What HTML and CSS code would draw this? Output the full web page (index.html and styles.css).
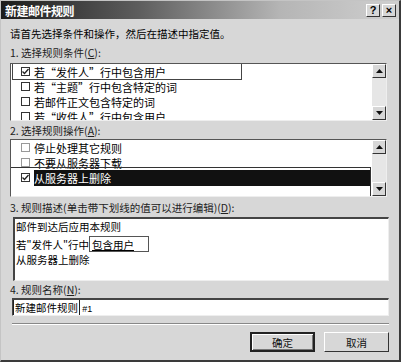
FILE: index.html
```html
<!DOCTYPE html>
<html lang="zh-CN">
<head>
    <meta charset="UTF-8">
    <title>新建邮件规则</title>
    <link rel="stylesheet" href="styles.css">
</head>
<body>

    <div class="dialog">
        <div class="titlebar">
            <span class="title">新建邮件规则</span>
            <div class="title-buttons">
                <span class="tbtn">?</span>
                <span class="tbtn">×</span>
            </div>
        </div>

        <div class="content">
            <div class="intro">请首先选择条件和操作，然后在描述中指定值。</div>

            <div class="label">1. 选择规则条件(<u>C</u>):</div>
            <div class="listbox">
                <div class="items">
                    <div class="row focus"><span class="check on"><svg width="7" height="7" viewBox="0 0 7 7"><polyline points="0.5,3.5 2.5,5.5 6.5,1" fill="none" stroke="#222" stroke-width="1.3"/></svg></span>若“发件人”行中包含用户</div>
                    <div class="row"><span class="check"></span>若“主题”行中包含特定的词</div>
                    <div class="row"><span class="check"></span>若邮件正文包含特定的词</div>
                    <div class="row"><span class="check"></span>若“收件人”行中包含用户</div>
                </div>
                <div class="scrollbar">
                    <span class="arrow"><svg width="7" height="4" viewBox="0 0 7 4"><polygon points="0,4 7,4 3.5,0" fill="#111"/></svg></span>
                    <span class="track"></span>
                    <span class="arrow"><svg width="7" height="4" viewBox="0 0 7 4"><polygon points="0,0 7,0 3.5,4" fill="#111"/></svg></span>
                </div>
            </div>

            <div class="label second">2. 选择规则操作(<u>A</u>):</div>
            <div class="listbox">
                <div class="items">
                    <div class="row"><span class="check dim"></span>停止处理其它规则</div>
                    <div class="row"><span class="check dim"></span>不要从服务器下载</div>
                    <div class="row picked"><span class="check on"><svg width="7" height="7" viewBox="0 0 7 7"><polyline points="0.5,3.5 2.5,5.5 6.5,1" fill="none" stroke="#222" stroke-width="1.3"/></svg></span><span class="highlight">从服务器上删除</span></div>
                </div>
                <div class="scrollbar">
                    <span class="arrow"><svg width="7" height="4" viewBox="0 0 7 4"><polygon points="0,4 7,4 3.5,0" fill="#111"/></svg></span>
                    <span class="track"></span>
                    <span class="arrow"><svg width="7" height="4" viewBox="0 0 7 4"><polygon points="0,0 7,0 3.5,4" fill="#111"/></svg></span>
                </div>
            </div>

            <div class="label third">3. 规则描述(单击带下划线的值可以进行编辑)(<u>D</u>):</div>
            <div class="description">
                <div class="line">邮件到达后应用本规则</div>
                <div class="line">若"发件人"行中<span class="value">包含用户</span></div>
                <div class="line">从服务器上删除</div>
            </div>

            <div class="label fourth">4. 规则名称(<u>N</u>):</div>
            <div class="name-input"><span class="sel">新建邮件规则</span> <span class="latin">#1</span></div>

            <div class="separator"></div>

            <div class="buttons">
                <button class="btn default">确定</button>
                <button class="btn">取消</button>
            </div>
        </div>
    </div>

</body>
</html>
```

FILE: styles.css
```css
body {
    margin: 0;
    font-family: "Noto Sans CJK SC", "Liberation Sans", sans-serif;
    font-size: 11px;
    color: #000;
}
.dialog {
    box-sizing: border-box;
    width: 401px;
    height: 362px;
    background-color: #d7d7d7;
    border: 1px solid #c4c4c4;
    border-right: 2px solid #3a3a3a;
    border-bottom: 2px solid #3a3a3a;
}
.titlebar {
    height: 18px;
    display: flex;
    align-items: center;
    justify-content: space-between;
    padding: 0 3px 0 4px;
    background: linear-gradient(to right, #1c1c1c 0%, #5e5e5e 35%, #b5b5b5 70%, #cfcfcf 100%);
}
.title {
    color: white;
    font-weight: bold;
    font-size: 12px;
    letter-spacing: -0.5px;
}
.title-buttons {
    display: flex;
    gap: 2px;
}
.tbtn {
    box-sizing: border-box;
    width: 14px;
    height: 13px;
    background-color: #d7d7d7;
    border: 1px solid;
    border-color: #fff #333 #333 #fff;
    font-family: "Liberation Sans", sans-serif;
    font-weight: bold;
    font-size: 11px;
    line-height: 11px;
    text-align: center;
}
.content {
    padding: 0 10px 0 9px;
}
.intro {
    margin-top: 7px;
    line-height: 16px;
    font-size: 10.5px;
}
.label {
    margin-top: 4px;
    line-height: 14px;
    font-size: 10.5px;
    color: #222;
}
.label u {
    text-underline-offset: 1px;
}
.label.second {
    margin-top: 3px;
}
.label.third {
    margin-top: 4px;
}
.label.fourth {
    margin-top: 2px;
}
.listbox {
    display: flex;
    height: 58px;
    margin-top: 3px;
    margin-right: 2px;
    box-sizing: border-box;
    background-color: white;
    border: 1px solid;
    border-color: #555 #eee #eee #555;
}
.label.second + .listbox {
    margin-top: 1px;
}
.items {
    flex: 1;
    overflow: hidden;
}
.row {
    position: relative;
    height: 15px;
    display: flex;
    align-items: center;
    padding-left: 10px;
    white-space: nowrap;
}
.row.focus {
    width: 228px;
    margin-left: 2px;
    padding-left: 8px;
    box-sizing: border-box;
    outline: 1px solid #444;
}
.row.picked::after {
    content: "";
    position: absolute;
    top: -3px;
    left: -4px;
    right: 1px;
    bottom: -13px;
    border: 1px solid #333;
    border-left-width: 2px;
}
.highlight {
    flex: 1;
    margin-right: 2px;
    background-color: #111;
    color: white;
    line-height: 16px;
}
.check {
    box-sizing: border-box;
    width: 9px;
    height: 9px;
    margin-right: 4px;
    border: 1px solid #333;
    background-color: white;
    display: flex;
    align-items: center;
    justify-content: center;
}
.check.dim {
    border-color: #999;
}
.scrollbar {
    width: 14px;
    display: flex;
    flex-direction: column;
    background-color: #e6e6e6;
}
.arrow {
    box-sizing: border-box;
    height: 14px;
    display: flex;
    align-items: center;
    justify-content: center;
    background-color: #d7d7d7;
    border: 1px solid;
    border-color: #fff #333 #333 #fff;
}
.track {
    flex: 1;
}
.description {
    margin: 2px 0 0 3px;
    height: 64px;
    box-sizing: border-box;
    background-color: white;
    border: 1px solid;
    border-color: #444 #eee #eee #444;
    border-top-width: 2px;
    border-left-width: 2px;
    font-size: 10.5px;
}
.line {
    height: 16.5px;
    line-height: 16.5px;
    padding-left: 1px;
}
.value {
    display: inline-block;
    width: 60px;
    height: 16px;
    line-height: 15px;
    box-sizing: border-box;
    border: 1px solid #555;
    padding-left: 2px;
    text-decoration: underline;
    text-underline-offset: 1px;
}
.name-input {
    margin: 1px 0 0 2px;
    height: 18px;
    line-height: 16px;
    box-sizing: border-box;
    background-color: white;
    border: 1px solid;
    border-color: #444 #eee #eee #444;
    border-top-width: 2px;
    font-size: 10.5px;
    white-space: nowrap;
}
.name-input .sel {
    border-left: 1px solid #222;
    border-right: 1px solid #222;
    padding: 0 1px;
}
.name-input .latin {
    font-family: "Liberation Sans", sans-serif;
    font-size: 9px;
}
.separator {
    margin: 7px 0 0 2px;
    height: 0;
    border-top: 1px solid #888;
    border-bottom: 1px solid #fff;
}
.buttons {
    display: flex;
    justify-content: flex-end;
    gap: 9px;
    margin-top: 7px;
}
.btn {
    box-sizing: border-box;
    width: 65px;
    height: 20px;
    padding: 0;
    font-family: "Noto Sans CJK SC", sans-serif;
    font-size: 10.5px;
    color: #111;
    background-color: #d7d7d7;
    border: 1px solid;
    border-color: #fff #333 #333 #fff;
}
.btn.default {
    border: 2px solid #222;
    box-shadow: inset 1px 1px 0 #fff, inset -1px -1px 0 #777;
}
```
